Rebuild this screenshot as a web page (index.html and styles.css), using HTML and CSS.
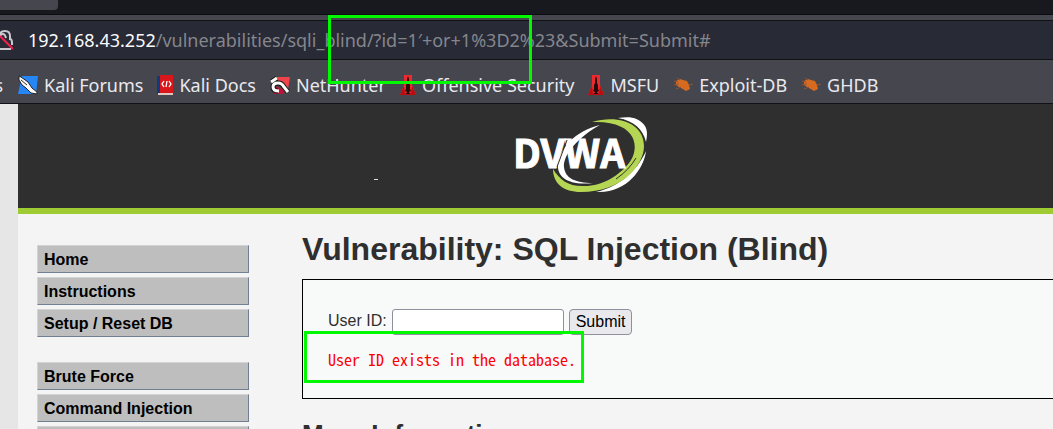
FILE: index.html
```html
<!DOCTYPE html>
<html lang="en">
<head>
<meta charset="utf-8">
<title>Vulnerability: SQL Injection (Blind)</title>
<link rel="stylesheet" href="styles.css">
</head>
<body>
<svg class="symbols" aria-hidden="true">
  <symbol id="rocket" viewBox="0 0 16 20">
    <path fill="#ed2a2d" d="M4 0h8v10l4 10H0L4 10z"/>
    <path fill="#b90d12" d="M4 11 0 20h16l-4-9-1 7H5z"/>
    <path fill="#260b0d" d="M8 1l1 3v4l1 2v4l1 2-2 1 1 2H6l1-2-2-1 1-2v-4l1-2V4z"/>
  </symbol>
  <symbol id="bug" viewBox="0 0 20 16">
    <path fill="#d66a20" d="M3 4l4-2 3 1 4 1 2 4 1 4-4 2-5-3-5-3z"/>
    <path fill="none" stroke="#8d5637" d="M1 4l4 1M1 8l5-1M3 12l5-2M7 3 4 1M16 8l4-1"/>
  </symbol>
</svg>
<header class="browser">
  <div class="tabs"><div class="tab"></div></div>
  <div class="address">
    <svg class="lock" viewBox="0 0 13 20" aria-hidden="true">
      <path d="M0 5Q0 1 5 1t5 5v3q2 0 2 4v2M0 19h11M0 6q1-2 3-2 2 0 3 4" fill="none" stroke="#c9c9ce" stroke-width="2"/>
      <path d="M0 6l13 13" stroke="#f0204c" stroke-width="2"/>
    </svg>
    <div class="url"><span class="host">192.168.43.252</span>/vulnerabilities/sqli_blind/?id=1′+or+1%3D2%23&amp;Submit=Submit#</div>
  </div>
  <nav class="bookmarks">
    <a href="#" class="cut">s</a>
    <a href="#"><svg viewBox="0 0 20 20" width="20" height="20"><path fill="#2686f5" d="M4 1h16l-2 18H0z"/><path fill="#f8f8f8" stroke="#222" d="M1 1l2 1 7 5 4 6 5 4v2l-6-1-5-5-4-3-3-5z"/><path d="M3 5l6 5" stroke="#333"/></svg>Kali Forums</a>
    <a href="#"><svg viewBox="0 0 16 20" width="16" height="20"><path fill="#0c3b80" d="M0 1h4v18H0z"/><path fill="#d91619" d="M3 0h13v18H3z"/><path fill="#ddc6c2" d="M1 18h15v2H1z"/><path d="M7 6 5 9l2 3M12 6l2 3-2 3M10 6l-1 6" fill="none" stroke="#fff" stroke-width="1.3"/></svg>Kali Docs</a>
    <a href="#"><svg viewBox="0 0 20 20" width="20" height="20"><path fill="#f04349" d="M5 2h15l-2 12L8 8z"/><path fill="#b41739" d="M2 10l14 5-3 4H4z"/><path d="M8 16Q3 16 3 12t5-4q4 0 6 4l4 5M1 7l6-4" fill="none" stroke="#171717" stroke-width="5"/><path d="M9 16Q3 16 3 12t5-4q4 0 6 4l4 5M1 7l6-4" fill="none" stroke="#fff" stroke-width="3"/></svg>NetHunter</a>
    <a href="#"><svg width="16" height="20"><use href="#rocket"/></svg>Offensive Security</a>
    <a href="#"><svg width="16" height="20"><use href="#rocket"/></svg>MSFU</a>
    <a href="#"><svg width="20" height="16"><use href="#bug"/></svg>Exploit-DB</a>
    <a href="#"><svg width="20" height="16"><use href="#bug"/></svg>GHDB</a>
  </nav>
</header>
<div class="page">
  <header class="banner">
    <span class="dash"></span>
    <svg class="logo" viewBox="0 0 132 76" role="img" aria-label="DVWA">
      <path fill="#fff" d="M103 1C114-1 124 0 130 9 133 14 132 20 131 25 128 12 119 4 103 1zM131 34C129 52 111 77 81 75 104 70 122 54 131 34z"/>
      <path fill="#b5d653" d="M77 5C103-3 129 6 129 29 129 48 107 75 66 75 48 75 38 66 38 52 45 63 53 69 67 69 86 70 104 59 114 46 126 31 122 3 77 5z"/>
      <path fill="#fff" d="M85 8C63 20 48 38 49 50 50 61 60 66 78 66 54 69 42 60 43 48 44 32 60 14 85 8z"/>
      <path stroke="#2f2f2f" fill="none" d="M101 62Q114 53 121 41"/>
      <text x="-2" y="51">DVWA</text>
      <path stroke="#2f2f2f" d="M52 23L42 50"/>
    </svg>
  </header>
  <div class="body">
    <nav class="menu">
      <ul><li><a href="#">Home</a></li><li><a href="#">Instructions</a></li><li><a href="#">Setup / Reset DB</a></li></ul>
      <ul><li><a href="#">Brute Force</a></li><li><a href="#">Command Injection</a></li><li><a href="#"></a></li></ul>
    </nav>
    <main>
      <h1>Vulnerability: SQL Injection (Blind)</h1>
      <section class="panel">
        <form>
          <label for="uid">User ID:</label>
          <input id="uid" type="text">
          <button type="button">Submit</button>
        </form>
        <pre>User ID exists in the database.</pre>
      </section>
      <h2>More Information</h2>
    </main>
  </div>
</div>
<div class="mark mark-url"></div>
<div class="mark mark-result"></div>
</body>
</html>
```
FILE: styles.css
```css
* { box-sizing: border-box; }
html { height: 100%; overflow: hidden; }
body {
  margin: 0;
  height: 100%;
  overflow: hidden;
  position: relative;
  display: flex;
  flex-direction: column;
  background: #e6e6e6;
  font-family: "Liberation Sans", Arial, sans-serif;
  font-size: 16px;
  color: #2f2f2f;
}
a { color: inherit; text-decoration: none; }
.symbols { position: absolute; width: 0; height: 0; }

.browser {
  flex: none;
  background: #46464f;
  border-bottom: 1px solid #111216;
  font-family: "Noto Sans", sans-serif;
  font-size: 18px;
}
.tabs { height: 15px; background: #18191e; border-bottom: 1px solid #0c0c10; }
.tab { width: 58px; height: 10px; background: #46464f; border-radius: 0 0 4px 0; }
.address {
  display: flex;
  align-items: center;
  gap: 15px;
  height: 40px;
  margin-top: 5px;
  background: #282a36;
  border: solid #111216;
  border-width: 1px 0;
}
.lock { flex: none; width: 13px; height: 20px; }
.url { color: #85868c; white-space: nowrap; }
.host { color: #fbfbfe; }
.bookmarks {
  display: flex;
  align-items: center;
  height: 43px;
  padding-top: 6px;
  color: #e9e9ed;
  white-space: nowrap;
}
.bookmarks a { display: flex; align-items: center; gap: 6px; margin-right: 14px; }
.bookmarks svg { flex: none; }
.bookmarks .cut { width: 3px; margin-right: 15px; justify-content: flex-end; }

.page {
  flex: 1;
  min-height: 0;
  display: flex;
  flex-direction: column;
  margin-left: 18px;
  overflow: hidden;
  background: #f4f4f4;
}
.banner {
  flex: none;
  display: flex;
  align-items: flex-start;
  padding: 13px 0 15px 356px;
  background: #2f2f2f;
  border-bottom: 6px solid #a0cc33;
}
.dash { width: 4px; height: 1px; margin: 62px 137px 0 0; background: #ddd; }
.logo { width: 132px; height: 76px; overflow: visible; }
.logo text {
  font: bold 39px "Noto Sans CJK SC", sans-serif;
  fill: #fff;
  stroke: #fff;
  stroke-width: 1px;
}
.body { display: flex; gap: 53px; padding: 16px 0 0 19px; }
.menu { flex: none; width: 212px; padding-top: 15px; }
.menu ul { list-style: none; margin: 0 0 25px; padding: 0; display: grid; gap: 4px; }
.menu a {
  display: block;
  min-height: 28px;
  padding: 5px 6px 3px;
  line-height: 18px;
  font-weight: bold;
  color: #000;
  background: #bebebe;
  border: 1px solid;
  border-color: #d3d3d3 #708090 #708090 #d3d3d3;
}
main { flex: 1; min-width: 0; }
h1 { margin: 0 0 11px; font-size: 32px; line-height: 38px; white-space: nowrap; }
h2 { margin: 21px 0 0; font-size: 26px; line-height: 29px; }
.panel {
  padding: 29px 25px 29px;
  background: #f8faf9;
  border: 1px solid #000;
  border-right: 0;
}
form { display: flex; align-items: center; gap: 5px; height: 26px; }
label { line-height: 24px; padding-bottom: 2px; }
input { width: 172px; height: 26px; border: 1px solid #8f8f9d; border-radius: 3px; background: #fff; }
button {
  height: 26px;
  padding: 0 6px;
  font: 16px "Liberation Sans", Arial, sans-serif;
  color: #000;
  background: #e9e9ed;
  border: 1px solid #8f8f9d;
  border-radius: 4px;
}
pre {
  margin: 14px 0 0;
  color: #f00;
  font: 16px/20px "Noto Sans Mono CJK SC", "Noto Sans Mono CJK JP", monospace;
}

.mark { position: absolute; border: 3px solid #00f800; }
.mark-url { left: 328px; top: 15px; width: 204px; height: 69px; }
.mark-result { left: 304px; top: 331px; width: 280px; height: 52px; }
```
